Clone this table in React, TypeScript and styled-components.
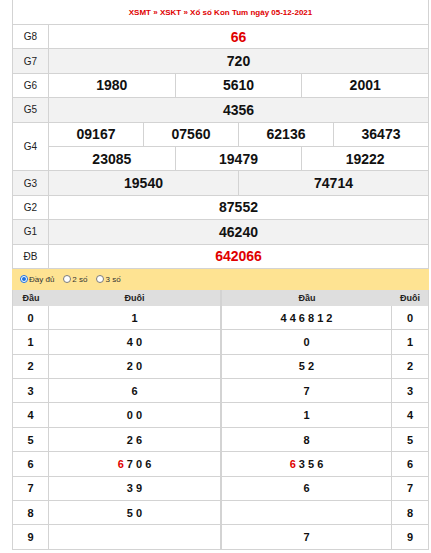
import React from "react";
import styled, { createGlobalStyle } from "styled-components";

const GlobalStyle = createGlobalStyle`
  html, body { margin: 0; padding: 0; background: #ffffff; }
  body { font-family: "Liberation Sans", Arial, sans-serif; color: #111; }
  * { box-sizing: border-box; }
`;

const LINE = "#d3d3d3";
const RED = "#e00000";
const ROW = 24.4;

const Page = styled.div`
  width: 431px;
  padding-left: 12px;
`;

const Board = styled.div`
  width: 417px;
  border-left: 1px solid ${LINE};
  border-right: 1px solid ${LINE};
`;

const TitleRow = styled.div`
  height: 25px;
  border-bottom: 1px solid ${LINE};
  display: flex;
  align-items: center;
  justify-content: center;
  font-size: 8px;
  font-weight: bold;
  color: ${RED};
  padding-top: 1px;
`;

const PrizeRow = styled.div<{ $alt?: boolean; $lines?: number }>`
  display: flex;
  height: ${(p) => (p.$lines ?? 1) * ROW}px;
  border-bottom: 1px solid ${LINE};
  background: ${(p) => (p.$alt ? "#f2f2f2" : "#ffffff")};
`;

const PrizeLabel = styled.div`
  width: 36px;
  flex: none;
  border-right: 1px solid ${LINE};
  display: flex;
  align-items: center;
  justify-content: center;
  font-size: 10px;
  color: #222;
`;

const PrizeStack = styled.div`
  flex: 1;
  display: flex;
  flex-direction: column;
`;

const PrizeLine = styled.div`
  flex: 1;
  display: flex;
  & + & {
    border-top: 1px solid ${LINE};
  }
`;

const Num = styled.div<{ $red?: boolean }>`
  flex: 1;
  display: flex;
  align-items: center;
  justify-content: center;
  font-size: 14px;
  font-weight: bold;
  color: ${(p) => (p.$red ? RED : "#111")};
  & + & {
    border-left: 1px solid ${LINE};
  }
`;

const OptionBar = styled.div`
  width: 417px;
  height: 21px;
  background: #fee392;
  display: flex;
  align-items: center;
  gap: 9px;
  padding-left: 8px;
`;

const Option = styled.label`
  display: flex;
  align-items: center;
  gap: 1px;
  font-size: 8px;
  color: #333;
`;

const RadioDot = styled.span<{ $checked?: boolean }>`
  width: 8px;
  height: 8px;
  border-radius: 50%;
  background: #fff;
  border: 1px solid ${(p) => (p.$checked ? "#1a6fe0" : "#7a7a7a")};
  display: flex;
  align-items: center;
  justify-content: center;
  &::after {
    content: "";
    width: 4px;
    height: 4px;
    border-radius: 50%;
    background: ${(p) => (p.$checked ? "#1a6fe0" : "transparent")};
  }
`;

const LotoWrap = styled.div`
  display: flex;
  width: 417px;
`;

const LotoPanel = styled.div<{ $w: number }>`
  width: ${(p) => p.$w}px;
  border-left: 1px solid ${LINE};
  border-right: 1px solid ${LINE};
`;

const LotoHead = styled.div`
  height: 16px;
  background: #dedede;
  display: flex;
  font-size: 9px;
  font-weight: bold;
  color: #222;
`;

const LotoRow = styled.div`
  height: ${ROW}px;
  display: flex;
  border-bottom: 1px solid ${LINE};
  font-size: 11px;
  font-weight: bold;
  color: #111;
`;

const KeyCell = styled.div<{ $side: "left" | "right" }>`
  width: 36px;
  flex: none;
  display: flex;
  align-items: center;
  justify-content: center;
  ${(p) => (p.$side === "left" ? `border-right: 1px solid ${LINE};` : "")}
`;

const ValCell = styled.div<{ $side: "left" | "right" }>`
  flex: 1;
  display: flex;
  align-items: center;
  justify-content: center;
  white-space: pre;
  ${(p) => (p.$side === "right" ? `border-right: 1px solid ${LINE};` : "")}
`;

const HeadKey = styled.div`
  width: 36px;
  flex: none;
  display: flex;
  align-items: center;
  justify-content: center;
`;

const HeadVal = styled.div`
  flex: 1;
  display: flex;
  align-items: center;
  justify-content: center;
`;

const Red = styled.span`
  color: ${RED};
`;

type Prize = { label: string; lines: string[][]; red?: boolean };

const prizes: Prize[] = [
  { label: "G8", lines: [["66"]], red: true },
  { label: "G7", lines: [["720"]] },
  { label: "G6", lines: [["1980", "5610", "2001"]] },
  { label: "G5", lines: [["4356"]] },
  { label: "G4", lines: [["09167", "07560", "62136", "36473"], ["23085", "19479", "19222"]] },
  { label: "G3", lines: [["19540", "74714"]] },
  { label: "G2", lines: [["87552"]] },
  { label: "G1", lines: [["46240"]] },
  { label: "ĐB", lines: [["642066"]], red: true },
];

const dauList: [string, string][] = [
  ["", "1"],
  ["", "4 0"],
  ["", "2 0"],
  ["", "6"],
  ["", "0 0"],
  ["", "2 6"],
  ["6", " 7 0 6"],
  ["", "3 9"],
  ["", "5 0"],
  ["", ""],
];

const duoiList: [string, string][] = [
  ["", "4 4 6 8 1 2"],
  ["", "0"],
  ["", "5 2"],
  ["", "7"],
  ["", "1"],
  ["", "8"],
  ["6", " 3 5 6"],
  ["", "6"],
  ["", ""],
  ["", "7"],
];

export default function App() {
  return (
    <Page>
      <GlobalStyle />
      <Board>
        <TitleRow>XSMT » XSKT » Xổ số Kon Tum ngày 05-12-2021</TitleRow>
        {prizes.map((p, i) => (
          <PrizeRow key={p.label} $alt={i % 2 === 1} $lines={p.lines.length}>
            <PrizeLabel>{p.label}</PrizeLabel>
            <PrizeStack>
              {p.lines.map((line, li) => (
                <PrizeLine key={li}>
                  {line.map((n, ni) => (
                    <Num key={ni} $red={p.red}>
                      {n}
                    </Num>
                  ))}
                </PrizeLine>
              ))}
            </PrizeStack>
          </PrizeRow>
        ))}
      </Board>
      <OptionBar>
        <Option>
          <RadioDot $checked />
          Đầy đủ
        </Option>
        <Option>
          <RadioDot />
          2 số
        </Option>
        <Option>
          <RadioDot />
          3 số
        </Option>
      </OptionBar>
      <LotoWrap>
        <LotoPanel $w={209}>
          <LotoHead>
            <HeadKey>Đầu</HeadKey>
            <HeadVal>Đuôi</HeadVal>
          </LotoHead>
          {dauList.map(([r, rest], i) => (
            <LotoRow key={i}>
              <KeyCell $side="left">{i}</KeyCell>
              <ValCell $side="left">
                {r && <Red>{r}</Red>}
                {rest}
              </ValCell>
            </LotoRow>
          ))}
        </LotoPanel>
        <LotoPanel $w={208}>
          <LotoHead>
            <HeadVal>Đầu</HeadVal>
            <HeadKey>Đuôi</HeadKey>
          </LotoHead>
          {duoiList.map(([r, rest], i) => (
            <LotoRow key={i}>
              <ValCell $side="right">
                {r && <Red>{r}</Red>}
                {rest}
              </ValCell>
              <KeyCell $side="right">{i}</KeyCell>
            </LotoRow>
          ))}
        </LotoPanel>
      </LotoWrap>
    </Page>
  );
}
